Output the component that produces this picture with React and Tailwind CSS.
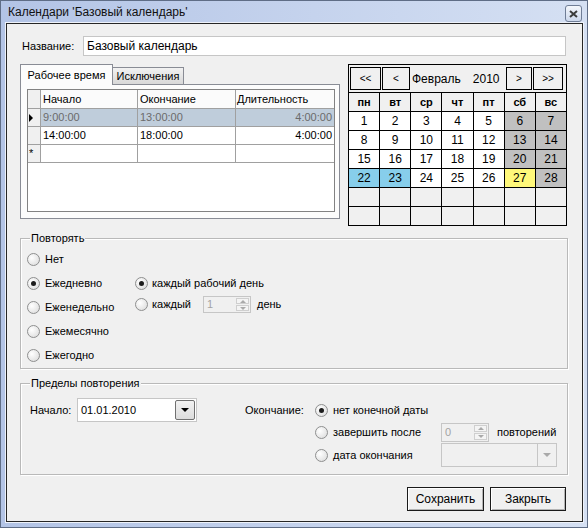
import React from "react";

const Radio = ({ checked }) => (
  <span className="w-[13px] h-[13px] shrink-0 rounded-full border border-[#8e8f8f] bg-[radial-gradient(circle_at_35%_35%,#ffffff,#e4e4e4_70%,#cfcfcf)] flex items-center justify-center">
    {checked && <span className="w-[5px] h-[5px] rounded-full bg-[#1c1c1c]" />}
  </span>
);

const Spinner = ({ value, h }) => (
  <div className={`w-[48px] ${h} border border-[#c6c6c6] bg-[#f0f0f0] flex`}>
    <span className="flex-1 pl-[3px] flex items-center text-[#a3a3a3]">{value}</span>
    <div className="w-[15px] flex flex-col gap-px p-px">
      <div className="flex-1 border border-[#cfcfcf] bg-[#f4f4f4] flex items-center justify-center">
        <span className="w-0 h-0 border-x-[3px] border-x-transparent border-b-[3px] border-b-[#a9a9a9]" />
      </div>
      <div className="flex-1 border border-[#cfcfcf] bg-[#f4f4f4] flex items-center justify-center">
        <span className="w-0 h-0 border-x-[3px] border-x-transparent border-t-[3px] border-t-[#a9a9a9]" />
      </div>
    </div>
  </div>
);

const gridRows = [
  { mark: "arrow", cells: ["9:00:00", "13:00:00", "4:00:00"], selected: true },
  { mark: "", cells: ["14:00:00", "18:00:00", "4:00:00"] },
  { mark: "*", cells: ["", "", ""] },
];

const days = ["пн", "вт", "ср", "чт", "пт", "сб", "вс"];
const weeks = [
  [1, 2, 3, 4, 5, 6, 7],
  [8, 9, 10, 11, 12, 13, 14],
  [15, 16, 17, 18, 19, 20, 21],
  [22, 23, 24, 25, 26, 27, 28],
  [null, null, null, null, null, null, null],
  [null, null, null, null, null, null, null],
];

const dayColor = (d, i) => {
  if (!d) return "bg-[#f0f0f0]";
  if (d === 22 || d === 23) return "bg-[#87ceeb]";
  if (d === 27) return "bg-[#fff87a]";
  if (i >= 5) return "bg-[#c0c0c0]";
  return "bg-white";
};

const NavBtn = ({ children, w }) => (
  <div className={`${w} h-[23px] border border-black bg-[#f0f0f0] flex items-center justify-center text-[10px]`}>
    {children}
  </div>
);

const Button = ({ children, w }) => (
  <div className={`${w} h-[24px] border border-[#1a1a1a] bg-[#f0f0f0] shadow-[inset_1px_1px_0_#ffffff,inset_-1px_-1px_0_#b4b4b4] flex items-center justify-center text-[12px]`}>
    {children}
  </div>
);

export default function App() {
  return (
    <div className="w-[588px] h-[528px] flex flex-col border border-[#5f6d86] bg-gradient-to-r from-[#b3c4e6] to-[#d5e0f3] font-['Liberation_Sans',Arial,sans-serif] text-[11px] text-black leading-none">
      {/* title bar */}
      <div className="h-[22px] shrink-0 flex items-start">
        <span className="ml-[7px] mt-[4px] text-[12px] leading-[14px] text-[#111]">Календари 'Базовый календарь'</span>
        <div className="ml-auto mr-[5px] mt-[4px] w-[17px] h-[17px] rounded-[3px] border border-[#6f7d96] bg-gradient-to-b from-[#f4f7fc] to-[#cdd8ec] flex items-center justify-center">
          <svg width="9" height="8" viewBox="0 0 9 8">
            <path d="M1 1 L8 7 M8 1 L1 7" stroke="#3b3b3b" strokeWidth="2" />
          </svg>
        </div>
      </div>

      {/* client area */}
      <div className="flex-1 ml-[5px] mr-[4px] mb-[5px] border border-[#262626] bg-[#f0f0f0] shadow-[0_0_0_1px_#eef2fa] pl-[13px] pr-[14px] flex flex-col">
        {/* name */}
        <div className="mt-[12px] h-[20px] flex items-center">
          <span className="ml-[2px] w-[61px]">Название:</span>
          <div className="w-[483px] h-[20px] border border-[#c6c6c6] bg-white flex items-center pl-[3px] text-[12px]">
            Базовый календарь
          </div>
        </div>

        <div className="mt-[8px] flex items-start">
          {/* tabs */}
          <div className="w-[320px] flex flex-col">
            <div className="flex items-end">
              <div className="relative z-10 w-[93px] h-[21px] -mb-px border border-b-0 border-[#898c95] bg-[#fcfcfc] flex items-center justify-center">
                Рабочее время
              </div>
              <div className="w-[71px] h-[17px] border border-l-0 border-b-0 border-[#898c95] bg-gradient-to-b from-[#f2f2f2] to-[#d8d8d8] flex items-center justify-center">
                Исключения
              </div>
            </div>
            <div className="h-[135px] border border-[#898c95] bg-[#fcfcfc] pl-[6px] pt-[4px]">
              <div className="w-[308px] h-[123px] border border-[#828282] bg-white flex flex-col">
                <div className="h-[19px] flex border-b border-[#a0a0a0] bg-[#fbfbfb]">
                  <div className="w-[13px] border-r border-[#a0a0a0] bg-[#f0f0f0]" />
                  <div className="w-[97px] border-r border-[#a0a0a0] pl-[2px] flex items-center">Начало</div>
                  <div className="w-[98px] border-r border-[#a0a0a0] pl-[2px] flex items-center">Окончание</div>
                  <div className="flex-1 pl-[1px] flex items-center">Длительность</div>
                </div>
                {gridRows.map((row, i) => (
                  <div key={i} className="h-[18px] flex border-b border-[#a0a0a0]">
                    <div className="w-[13px] border-r border-[#a0a0a0] bg-[#f0f0f0] flex items-center pl-[1px]">
                      {row.mark === "arrow" ? (
                        <span className="w-0 h-0 border-y-[4px] border-y-transparent border-l-[4px] border-l-black" />
                      ) : (
                        <span className="text-[11px]">{row.mark}</span>
                      )}
                    </div>
                    {row.cells.map((c, j) => (
                      <div
                        key={j}
                        className={`${j === 0 ? "w-[97px] border-r pl-[2px]" : j === 1 ? "w-[98px] border-r pl-[2px]" : "flex-1 justify-end pr-[2px]"} border-[#a0a0a0] flex items-center ${row.selected ? "bg-[#bfcddb] text-[#6b6b6b]" : "bg-white"}`}
                      >
                        {c}
                      </div>
                    ))}
                  </div>
                ))}
              </div>
            </div>
          </div>

          {/* calendar */}
          <div className="ml-[8px] w-[219px] border border-black bg-black flex flex-col gap-px">
            <div className="h-[27px] bg-[#f0f0f0] flex items-start pt-[2px] pl-px pr-[3px]">
              <NavBtn w="w-[31px]">&lt;&lt;</NavBtn>
              <div className="ml-px">
                <NavBtn w="w-[28px]">&lt;</NavBtn>
              </div>
              <div className="flex-1 h-[23px] flex items-center pl-[2px] text-[12px]">
                <span>Февраль</span>
                <span className="ml-[12px]">2010</span>
              </div>
              <NavBtn w="w-[26px]">&gt;</NavBtn>
              <div className="ml-px">
                <NavBtn w="w-[30px]">&gt;&gt;</NavBtn>
              </div>
            </div>
            <div className="grid grid-cols-7 gap-px">
              {days.map((d) => (
                <div key={d} className="h-[18px] bg-[#f0f0f0] flex items-center justify-center font-bold">
                  {d}
                </div>
              ))}
              {weeks.map((w, wi) =>
                w.map((d, i) => (
                  <div key={`${wi}-${i}`} className={`h-[18px] ${dayColor(d, i)} flex items-center justify-center text-[12px]`}>
                    {d}
                  </div>
                ))
              )}
            </div>
          </div>
        </div>

        {/* repeat group */}
        <div className="mt-[12px] h-[131px] border border-[#b9b9b9] shadow-[inset_1px_1px_0_#ffffff,1px_1px_0_#ffffff] flex flex-col">
          <span className="-mt-[7px] ml-[9px] w-fit px-px bg-[#f0f0f0] leading-[13px]">Повторять</span>
          <div className="mt-[2px] flex items-start">
            <div className="ml-[6px] w-[108px] flex flex-col">
              {["Нет", "Ежедневно", "Еженедельно", "Ежемесячно", "Ежегодно"].map((t, i) => (
                <div key={t} className="h-[24px] flex items-center gap-[5px]">
                  <Radio checked={i === 1} />
                  <span>{t}</span>
                </div>
              ))}
            </div>
            <div className="mt-[24px] flex flex-col">
              <div className="h-[24px] flex items-center gap-[4px]">
                <Radio checked />
                <span>каждый рабочий день</span>
              </div>
              <div className="mt-px h-[17px] flex items-center gap-[4px]">
                <Radio />
                <span className="w-[47px]">каждый</span>
                <Spinner value="1" h="h-[17px]" />
                <span className="ml-[2px]">день</span>
              </div>
            </div>
          </div>
        </div>

        {/* limits group */}
        <div className="mt-[14px] h-[92px] border border-[#b9b9b9] shadow-[inset_1px_1px_0_#ffffff,1px_1px_0_#ffffff] flex flex-col">
          <span className="-mt-[7px] ml-[9px] w-fit px-px bg-[#f0f0f0] leading-[13px]">Пределы повторения</span>
          <div className="flex items-start">
            <div className="ml-[9px] mt-[8px] h-[24px] flex items-center">
              <span className="w-[47px]">Начало:</span>
              <div className="w-[120px] h-[24px] border border-[#c6c6c6] bg-white flex items-center">
                <span className="flex-1 pl-[3px]">01.01.2010</span>
                <div className="mr-px w-[20px] h-[20px] rounded-[2px] border border-[#707070] bg-gradient-to-b from-[#f2f2f2] to-[#dcdcdc] flex items-center justify-center">
                  <span className="w-0 h-0 border-x-[4px] border-x-transparent border-t-[4px] border-t-black" />
                </div>
              </div>
              <span className="ml-[48px] w-[70px]">Окончание:</span>
            </div>
            <div className="mt-[9px] flex flex-col">
              <div className="h-[22px] flex items-center gap-[5px]">
                <Radio checked />
                <span>нет конечной даты</span>
              </div>
              <div className="h-[22px] flex items-center gap-[5px]">
                <Radio />
                <span className="w-[103px]">завершить после</span>
                <Spinner value="0" h="h-[19px]" />
                <span className="ml-[3px]">повторений</span>
              </div>
              <div className="h-[24px] flex items-center gap-[5px]">
                <Radio />
                <span className="w-[103px]">дата окончания</span>
                <div className="w-[116px] h-[24px] border border-[#c6c6c6] bg-[#f0f0f0] flex justify-end">
                  <div className="w-[19px] border-l border-[#c6c6c6] flex items-center justify-center">
                    <span className="w-0 h-0 border-x-[4px] border-x-transparent border-t-[4px] border-t-[#a9a9a9]" />
                  </div>
                </div>
              </div>
            </div>
          </div>
        </div>

        {/* buttons */}
        <div className="mt-[12px] mr-[2px] flex justify-end gap-[6px]">
          <Button w="w-[77px]">Сохранить</Button>
          <Button w="w-[76px]">Закрыть</Button>
        </div>
      </div>
    </div>
  );
}
